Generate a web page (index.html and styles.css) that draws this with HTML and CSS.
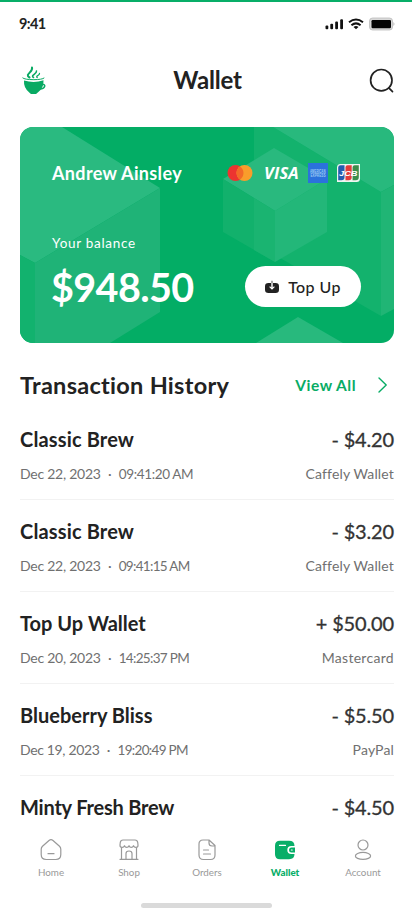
FILE: index.html
```html
<!DOCTYPE html>
<html lang="en">
<head>
<meta charset="utf-8">
<meta name="viewport" content="width=device-width, initial-scale=1">
<title>Wallet</title>
<link rel="stylesheet" href="styles.css">
</head>
<body>
<div class="screen">
  <div class="status">
    <span class="time">9:41</span>
    <svg class="status-icons" width="70" height="14" viewBox="0 0 70 14">
      <g fill="#111"><rect x=".5" y="8.500" width="2.800" height="3.700" rx="1"/><rect x="5.300" y="6.800" width="2.800" height="5.400" rx="1"/><rect x="10.200" y="4.600" width="2.800" height="7.600" rx="1"/><rect x="15.200" y="2.200" width="2.800" height="10" rx="1"/></g>
      <g fill="none" stroke="#111" stroke-width="2"><path d="M24 5.200q7-5.400 14 0"/><path d="M26.400 8.200q4.600-3.600 9.200 0"/></g>
      <path d="M28.500 10q2.500-1.800 5 0L31 12.200z" fill="#111"/>
      <rect x="44.500" y="1" width="23" height="12" rx="3" fill="#d9d9d9" stroke="#bbb" stroke-width=".8"/>
      <rect x="46.500" y="3" width="19.500" height="8.200" rx="1.200" fill="#050505"/>
      <path d="M68.500 5q1.800 2 0 4z" fill="#aaa"/>
    </svg>
  </div>

  <header class="header">
    <svg width="28" height="30" viewBox="0 0 28 30">
      <path d="M4 14.500q10 3 19.500-.2.500 8-6 12.500l-1.500 1.100h-5L9.500 26.700Q3.400 22 4 14.500z" fill="#08aa63"/>
      <g fill="none" stroke="#08aa63" stroke-linecap="round">
        <path d="M2.800 12q1.500 1.600 11 1.700 8.500-.1 10.200-1.600" stroke-width="1"/>
        <path d="M22.500 18.700c3.200-1.200 3.300 3.600-1.700 4.400" stroke-width="1.500"/>
        <path d="M9.500 11.500C4 8.500 13.500 6 12 1.500" stroke-width="2"/>
        <path d="M13.500 11.500c-3.500-2 3.500-3.500 3-6.500" stroke-width="1.600"/>
        <path d="M17.200 11.500c-2-1.500 2.500-2 2.300-4" stroke-width="1.300"/>
      </g>
    </svg>
    <h1>Wallet</h1>
    <svg width="28" height="28" viewBox="0 0 28 28" fill="none" stroke="#222" stroke-width="1.700" stroke-linecap="round"><circle cx="14.300" cy="13.200" r="10.700"/><path d="m21.800 20.800 3.700 3.800"/></svg>
  </header>

  <section class="card">
    <svg class="card-art" viewBox="0 0 374 216" preserveAspectRatio="none">
      <path d="M0 0h42l98 61-125 75-15-8z" fill="#2aba80"/>
      <path d="M140 61v124l-50 31H15v-80z" fill="#1fb377"/>
      <path d="m0 128 15 8v80H0z" fill="#12b26e"/>
      <path d="M234 0h19l108 65v124l-127-73z" fill="#13b26d"/>
      <path d="M253 0h121v58l-13 7z" fill="#28b97d"/>
      <path d="m361 65 13-7v124l-13 7z" fill="#20b575"/>
      <path d="m254 21 53 31-52 32-52-32z" fill="#29b97e"/>
      <path d="m203 52 52 32v51l-52-30z" fill="#12b16c"/>
      <path d="m234 71 21 13v51l-21-12z" fill="#1ab471"/>
      <path d="m307 52-52 32v51l52-30z" fill="#23b779"/>
      <path d="m278 190 45 26h-87z" fill="#28b97d"/>
    </svg>
    <div class="card-body">
      <div class="card-top">
        <span class="owner">Andrew Ainsley</span>
        <div class="brands">
          <svg width="26" height="18" viewBox="0 0 26 18"><circle cx="8.500" cy="9" r="8" fill="#ec3430"/><circle cx="17.500" cy="9" r="8" fill="#f99d2b"/><path d="M13 2.400a8 8 0 0 1 0 13.200 8 8 0 0 1 0-13.200z" fill="#f26a28"/></svg>
          <span class="visa">VISA</span>
          <svg class="amex" width="20" height="20" viewBox="0 0 20 20"><path d="M0 0h20v20H0z" fill="#2b72dc"/><g class="amex-text"><text x="2" y="9.800" textLength="15.500" lengthAdjust="spacingAndGlyphs">AMERICAN</text><text x="2.500" y="14" textLength="15" lengthAdjust="spacingAndGlyphs">EXPRESS</text></g></svg>
          <svg class="jcb" width="25" height="20" viewBox="0 0 25 20"><path d="M4.500 1H24v14.500a3.500 3.500 0 0 1-3.500 3.500H1V4.500A3.500 3.500 0 0 1 4.500 1z" fill="#eef6f1"/><path d="M4.500 2.300h4v12a3 3 0 0 1-3 3H2.200V4.600a2.300 2.300 0 0 1 2.300-2.300z" fill="#245cb0"/><path d="M11.500 2.300h4.200v12a3 3 0 0 1-3 3H9.500v-13a2 2 0 0 1 2-2z" fill="#e23b3b"/><path d="M18.600 2.300h4.200v12a3 3 0 0 1-3 3h-3.200v-13a2 2 0 0 1 2-2z" fill="#3b8d4a"/><text x="3" y="13" textLength="18.500" lengthAdjust="spacingAndGlyphs">JCB</text></svg>
        </div>
      </div>
      <div class="balance-label">Your balance</div>
      <div class="card-bottom">
        <span class="balance">$948.50</span>
        <button class="topup"><svg width="14" height="14" viewBox="0 0 14 14"><path d="M3.500 3h2.800v4.400L5 6.200l-.8.900L7 9.800l2.800-2.700-.8-.9-1.300 1.200V3h2.800Q14 3 14 6.300v3.400Q14 13 10.500 13h-7Q0 13 0 9.700V6.300Q0 3 3.500 3z" fill="#222"/><path d="M6.600.8h.8V3h-.8z" fill="#222"/></svg><span>Top Up</span></button>
      </div>
    </div>
  </section>

  <div class="section-head">
    <h2>Transaction History</h2>
    <a class="view-all"><span>View All</span><svg width="12" height="18" viewBox="0 0 12 18" fill="none" stroke="#08ac65" stroke-width="1.400" stroke-linecap="round" stroke-linejoin="round"><path d="m2 2 7.200 7L2 16"/></svg></a>
  </div>

  <main class="list">
    <article class="row"><div class="line"><h3 class="brew">Classic Brew</h3><span class="amount">- $4.20</span></div><div class="meta"><span><span class="date">Dec 22, 2023</span><i>·</i><span class="clock">09:41:20 AM</span></span><span class="source">Caffely Wallet</span></div></article>
    <article class="row"><div class="line"><h3 class="brew">Classic Brew</h3><span class="amount">- $3.20</span></div><div class="meta"><span><span class="date">Dec 22, 2023</span><i>·</i><span class="clock short">09:41:15 AM</span></span><span class="source">Caffely Wallet</span></div></article>
    <article class="row"><div class="line"><h3>Top Up Wallet</h3><span class="amount">+ $50.00</span></div><div class="meta"><span><span class="date">Dec 20, 2023</span><i>·</i><span class="clock short">14:25:37 PM</span></span><span class="source card-name">Mastercard</span></div></article>
    <article class="row"><div class="line"><h3>Blueberry Bliss</h3><span class="amount">- $5.50</span></div><div class="meta"><span><span class="date narrow">Dec 19, 2023</span><i>·</i><span class="clock short">19:20:49 PM</span></span><span class="source">PayPal</span></div></article>
    <article class="row"><div class="line"><h3 class="minty">Minty Fresh Brew</h3><span class="amount">- $4.50</span></div></article>
  </main>

  <nav class="nav">
    <a><svg width="24" height="24" viewBox="0 0 24 24"><path d="M3.500 8.200 10 2.500q2-1.600 4 0l6.500 5.700q1.300 1.200 1.300 3v5.300q0 5-5 5H7.200q-5 0-5-5v-5.300q0-1.800 1.300-3zM9 15.700h6"/></svg><span>Home</span></a>
    <a><svg width="24" height="24" viewBox="0 0 24 24"><path d="M6 2h12q2.300 0 2.700 2.300L21 7c.3 2.800-3.500 3.200-4.500.7-.8 2.300-3.700 2.300-4.500 0-.8 2.300-3.700 2.300-4.500 0C6.500 10.200 2.700 9.800 3 7l.3-2.700Q3.700 2 6 2zM4.500 10v11M19.500 10v11M3 21.300h18M9 21v-5.500q0-2.500 3-2.500t3 2.500V21"/></svg><span>Shop</span></a>
    <a><svg width="24" height="24" viewBox="0 0 24 24"><path d="M8 2h6l6 5.500V17q0 4.500-4.500 4.500h-7Q4 21.500 4 17V6q0-4 4-4zM14 2v3q0 3 3 3h3M8.500 12h5M8.500 16h7"/></svg><span>Orders</span></a>
    <a class="active"><svg width="24" height="24" viewBox="0 0 24 24"><path class="solid" d="M7 2.700h9q5.500 0 5.500 5.400h-3.200a4 4 0 0 0 0 8h3.200q0 5.200-5.500 5.200H7q-5 0-5-5V7.700q0-5 5-5z"/><path class="solid" d="M18.500 9.600H22v5h-3.500a2.500 2.500 0 0 1 0-5z"/><path class="slot" d="M6.500 7.400h6M18.400 12h.8"/></svg><span>Wallet</span></a>
    <a><svg width="24" height="24" viewBox="0 0 24 24"><circle cx="12" cy="7" r="5"/><ellipse cx="12" cy="17.900" rx="7.600" ry="3.500"/></svg><span>Account</span></a>
  </nav>
  <div class="home-indicator"></div>
</div>
</body>
</html>
```
FILE: styles.css
```css
* { box-sizing: border-box; }
body { margin: 0; background: #fff; }
.screen {
  width: 412px; height: 910px; overflow: hidden;
  display: flex; flex-direction: column;
  border-top: 2px solid #08ae68;
  background: #fff; color: #222;
  font-family: Lato, "Liberation Sans", sans-serif;
  font-variant-ligatures: none;
}
svg { display: block; flex: none; }
h1, h2, h3 { margin: 0; font-weight: 700; white-space: nowrap; }
span { white-space: nowrap; }

.status { height: 42px; flex: none; display: flex; justify-content: space-between; align-items: center; padding: 0 17px 0 19px; }
.time { font-size: 14.500px; font-weight: 700; letter-spacing: -0.6px; }
.status-icons { margin-top: 2px; }

.header { height: 74px; flex: none; display: flex; align-items: center; justify-content: space-between; padding: 0 17px 0 20px; }
h1 { font-size: 24px; letter-spacing: -0.2px; padding-bottom: 3px; }

.card { height: 216px; flex: none; margin: 9px 18px 0 20px; border-radius: 13px; overflow: hidden; position: relative; background: #03ad65; color: #fff; }
.card-art { position: absolute; inset: 0; width: 100%; height: 100%; }
.card-body { position: relative; padding: 36px 33px 0 32px; }
.card-top { height: 20px; display: flex; align-items: center; justify-content: space-between; }
.owner { font-size: 18px; font-weight: 700; letter-spacing: 0.35px; }
.brands { display: flex; align-items: center; }
.visa { width: 36px; margin-left: 11px; font: italic 700 16.500px/20px "Open Sans", sans-serif; letter-spacing: 0.2px; }
.amex { margin-left: 8px; }
.amex-text { font: 700 4.500px "Liberation Sans", sans-serif; fill: #9fcdf3; }
.jcb { margin-left: 8px; }
.jcb text { font: italic 700 8px "Liberation Sans", sans-serif; fill: #fff; }
.balance-label { margin-top: 50px; height: 20px; line-height: 20px; font-size: 13.500px; letter-spacing: 0.7px; }
.card-bottom { margin-top: 12px; height: 42px; display: flex; justify-content: space-between; align-items: center; }
.balance { font-size: 39.500px; font-weight: 700; letter-spacing: -0.6px; line-height: 42px; margin: 2px 0 0 -1px; }
.topup { width: 116px; height: 41px; margin-top: 1px; padding: 0; border: 0; border-radius: 21px; background: #fff; color: #222; display: flex; align-items: center; justify-content: center; gap: 9px; font: 500 16px Lato, sans-serif; letter-spacing: 0.4px; }

.section-head { height: 46px; flex: none; margin-top: 19px; padding: 0 23px 0 20px; display: flex; align-items: center; justify-content: space-between; }
h2 { font-size: 23.500px; letter-spacing: 0.28px; }
.view-all { display: flex; align-items: center; gap: 21px; color: #08ac65; font-size: 15.500px; font-weight: 700; letter-spacing: 0.5px; }
.view-all span { margin-left: -1px; }

.list { height: 418px; flex: none; overflow: hidden; padding: 0 18px 0 20px; }
.row { height: 92.100px; padding-top: 14px; border-bottom: 1px solid #f2f2f2; }
.line { height: 34px; display: flex; align-items: center; justify-content: space-between; }
h3 { font-size: 20px; }
.brew { letter-spacing: 0.15px; }
.minty { letter-spacing: -0.2px; }
.amount { font-size: 20px; color: #333; letter-spacing: -0.15px; -webkit-text-stroke: 0.3px #333; }
.meta { height: 34px; display: flex; align-items: center; justify-content: space-between; font-size: 14px; color: #707070; }
.meta i { display: inline-block; width: 18px; text-align: center; font-style: normal; }
.date { letter-spacing: -0.25px; }
.narrow { letter-spacing: -0.35px; }
.clock { font-size: 13.500px; letter-spacing: -0.35px; }
.short { letter-spacing: -0.68px; }
.source { letter-spacing: 0.15px; }
.card-name { letter-spacing: 0.3px; }

.nav { height: 62px; flex: none; display: grid; grid-template-columns: repeat(5, 78px); padding-left: 12px; }
.nav a { display: flex; flex-direction: column; align-items: center; padding-top: 12px; gap: 2.500px; font-size: 9.800px; line-height: 14px; color: #999; }
.nav svg { fill: none; stroke: #999; stroke-width: 1.200; stroke-linecap: round; stroke-linejoin: round; }
.nav .active { color: #08ae68; font-weight: 900; }
.nav .solid { fill: #08ae68; stroke: none; }
.nav .slot { stroke: #fff; }
.home-indicator { width: 131px; height: 5px; flex: none; border-radius: 3px; margin: 15px 0 0 141px; background: #dadada; }
```
